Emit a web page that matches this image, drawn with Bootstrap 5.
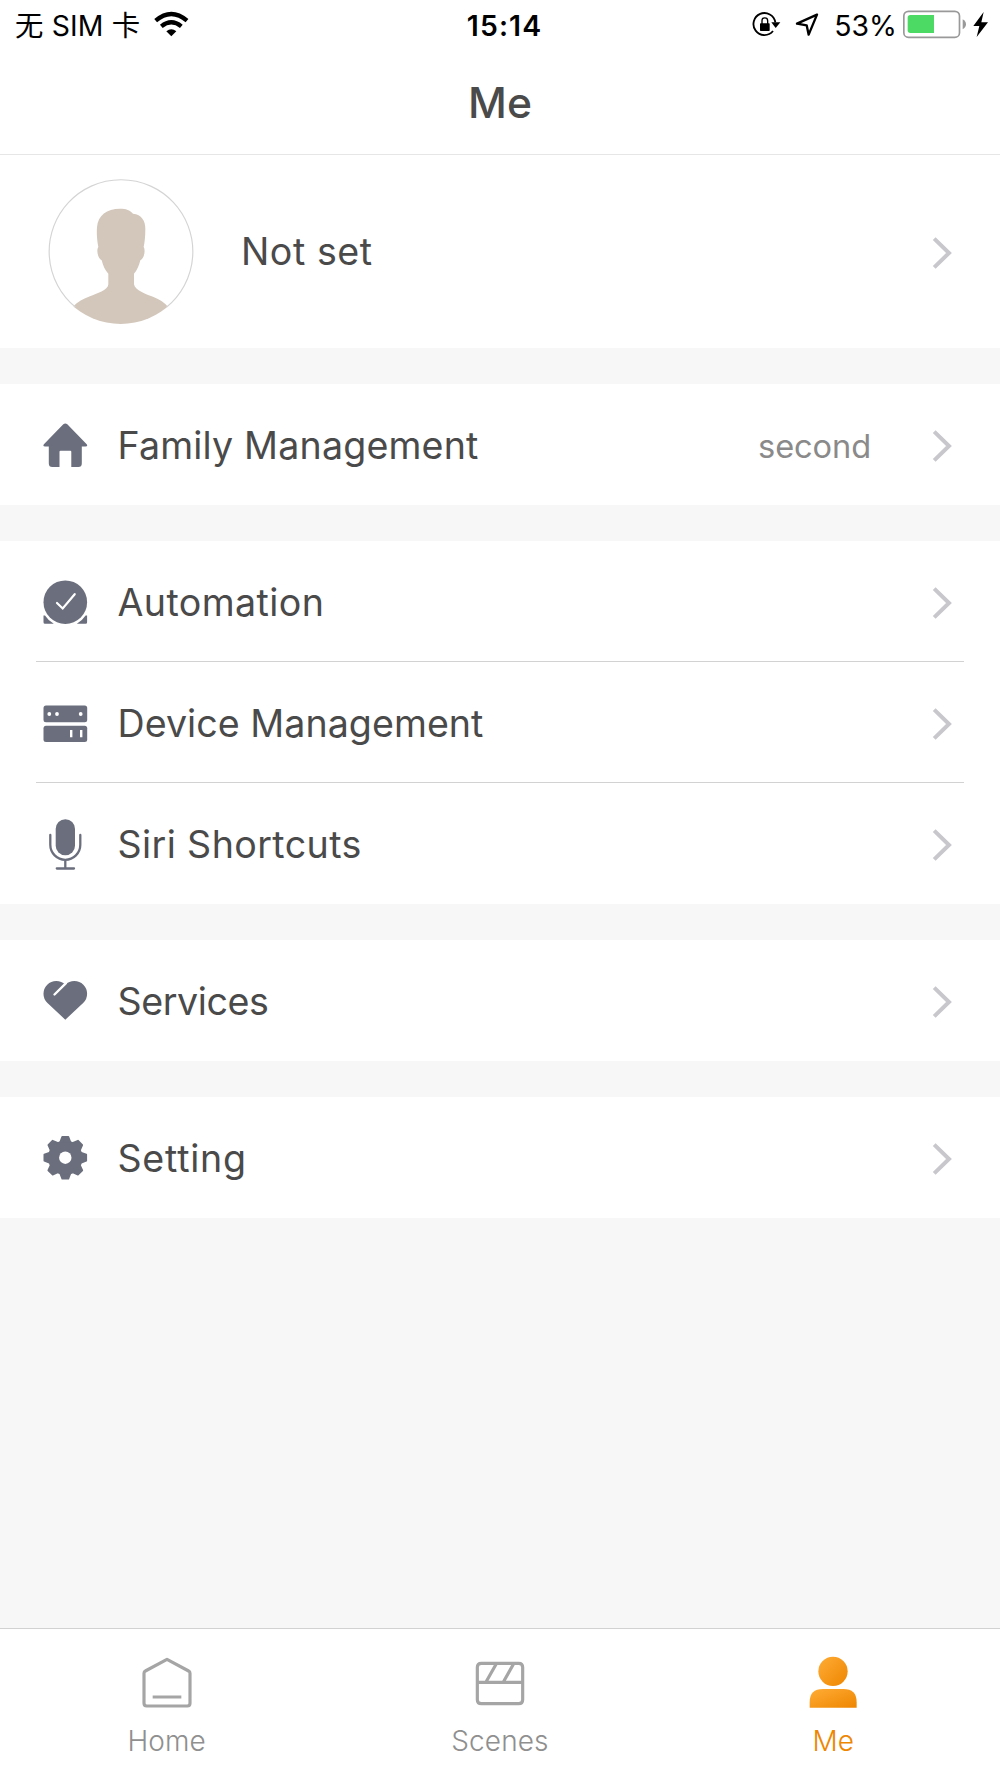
<!DOCTYPE html>
<html lang="en">
<head>
<meta charset="utf-8">
<meta name="viewport" content="width=device-width, initial-scale=1">
<title>Me</title>
<link href="https://cdn.jsdelivr.net/npm/bootstrap@5.3.0/dist/css/bootstrap.min.css" rel="stylesheet">
<style>
body{font-family:Inter,"Noto Sans CJK SC",sans-serif;background:#f7f7f7;color:#4a4a4a;height:1778px;overflow:hidden}
svg{display:block;flex:none}
a{color:inherit;text-decoration:none}
.statusbar{height:50px;color:#000;font-size:28.4px;line-height:52px;padding:0 11px}
.statusbar>div{flex:1 1 0}
.statusbar span{padding-top:1px}
.carrier{margin:0 13px 0 4px;letter-spacing:.15px}
.clock{font-weight:600;letter-spacing:1.1px;padding-left:9px}
.rotation{margin-right:14px}
.location{margin-right:15px}
.power{margin:0 5px}
.titlebar{height:105px;border-bottom:1px solid #e6e6e6;font-size:42.6px;font-weight:500;line-height:106px}
.profile{height:193px;padding:0 48px;color:#4a4a4a}
.profile-name{font-size:37.6px;letter-spacing:.55px;margin-left:47px;padding-top:2px}
.menu-group{padding:0 36px;margin-top:36px}
.menu-row{height:121px;padding:0 12px 0 7px;font-size:37.6px;line-height:48px}
.menu-row+.menu-row{box-shadow:0 -1px 0 #d2d2d2}
.menu-icon{width:45px;height:52px;fill:#6b6f7d;margin-right:29.5px}
.menu-label{padding-top:2px;letter-spacing:.18px}
.track-tight{letter-spacing:-.4px}
.track-device{letter-spacing:.05px}
.track-mid{letter-spacing:.4px}
.track-wide{letter-spacing:.75px}
.aside-note{font-size:32.6px;color:#8a8a8a;margin-right:61px;padding-top:2px;letter-spacing:-.1px}
.chevron{width:20px;height:34px;margin-top:2px;fill:none;stroke:#c7c7cc;stroke-width:4}
.tabbar{height:150px;border-top:1px solid #d2d2d2;font-size:28px;font-weight:300;line-height:40px;color:#8f8f8f;letter-spacing:.1px}
.tabbar svg{width:50px;height:81px;margin-bottom:11px}
.tab-line{fill:none;stroke:#a5a5a5;stroke-width:9.5;stroke-linejoin:round}
.tab-on{color:#ee8600}
</style>
</head>
<body class="d-flex flex-column">
<svg width="0" height="0" class="position-absolute">
<defs>
<symbol id="chev" viewBox="0 0 20 34"><path d="M2.2 2.6 17 17 2.2 31.4"/></symbol>
<linearGradient id="amber" x1="0" y1="0" x2="1" y2="1"><stop offset="0" stop-color="#ffac36"/><stop offset="1" stop-color="#ee8600"/></linearGradient>
<clipPath id="disc"><circle cx="272" cy="304" r="217"/></clipPath>
</defs>
</svg>
<header class="bg-white">
<div class="statusbar d-flex">
<div class="d-flex align-items-center"><span class="carrier">无 SIM 卡</span>
<svg width="36.67" height="50" viewBox="460 0 110 150"><g fill="none" stroke="#000" stroke-width="13"><path d="M468 62Q515 22 562 62"/><path d="M485 79Q515 55 545 79"/></g><path d="M500 94Q515 81 530 94L515 109Z"/></svg>
</div>
<div class="text-center clock">15:14</div>
<div class="d-flex align-items-center justify-content-end">
<svg class="rotation" width="29" height="50" viewBox="36 0 87 150"><path d="M99 93A33 33 0 1 1 106 67" fill="none" stroke="#000" stroke-width="5.5"/><path d="M94 67H121L107 84Z"/><rect x="60" y="70" width="29" height="23" rx="2"/><path d="M66 72V62a8.500 8.500 0 0 1 17 0V72" fill="none" stroke="#000" stroke-width="4"/></svg>
<svg class="location" width="24" height="50" viewBox="165 0 72 150"><path d="M231 44 171 71 200 76 206 104Z" fill="none" stroke="#000" stroke-width="7" stroke-linejoin="round"/></svg>
<span>53%</span>
<svg class="power" width="65" height="50" viewBox="486 0 195 150"><rect x="491.500" y="34" width="167" height="78" rx="14" fill="none" stroke="#999" stroke-width="5"/><path d="M582 45V99H511Q503 99 503 91V53Q503 45 511 45Z" fill="#4cd964"/><path d="M668 58Q678 64 678 73T668 88Z" fill="#999"/></svg>
<svg width="17" height="50" viewBox="696 0 51 150"><path d="M731 36 700 78H718L710 111 744 67H724Z"/></svg>
</div>
</div>
<div class="titlebar text-center">Me</div>
</header>
<main>
<a href="#" class="bg-white profile d-flex align-items-center">
<svg width="146" height="146" viewBox="54 86 438 438"><g clip-path="url(#disc)"><path fill="#d3c7bb" d="M205 290C200 265 200 245 201 230C204 195 230 175 270 175C288 175 300 179 309 190C335 192 346 212 346 235C346 258 344 275 341 290C346 296 345 322 331 330C327 346 321 361 312 370V402C315 420 350 432 365 438C390 448 405 458 414 470V530H130V468C142 455 160 445 180 438C200 430 234 420 235 402V370C225 360 219 346 215 330C202 322 199 298 205 290Z"/></g><path d="M136 470A215.500 215.500 0 1 1 410 470" fill="none" stroke="#d4d4d4" stroke-width="3.500"/></svg>
<span class="profile-name">Not set</span><svg class="chevron ms-auto"><use href="#chev"/></svg></a>

<section class="bg-white menu-group">
<a href="#" class="menu-row d-flex align-items-center"><svg class="menu-icon" viewBox="0 0 45 52"><path d="M20.300 5.300Q22.300 3.800 24.300 5.300L43.700 25.200Q45.200 27.500 42.500 27.500H38.800V44.500Q38.800 48 35.300 48H28.300V32.700Q28.300 31.700 27.300 31.700H17.500Q16.500 31.700 16.500 32.700V48H9.300Q5.800 48 5.800 44.500V27.500H2.100Q-.6 27.500 .9 25.200Z"/></svg><span class="menu-label">Family Management</span><span class="aside-note ms-auto">second</span><svg class="chevron"><use href="#chev"/></svg></a>
</section>

<section class="bg-white menu-group">
<a href="#" class="menu-row d-flex align-items-center"><svg class="menu-icon" viewBox="0 0 45 52"><circle cx="22.300" cy="26.200" r="21.800"/><path d="M14 27 19.700 32.500 31.700 18.200" fill="none" stroke="#fff" stroke-width="2.200" stroke-linecap="round"/><path d="M.5 39.500H2A26 26 0 0 0 10.800 47.800H2Q.5 47.800 .5 46.300ZM44.100 39.500H42.600A26 26 0 0 1 33.800 47.800H42.600Q44.100 47.800 44.100 46.300Z"/></svg><span class="menu-label track-mid">Automation</span><svg class="chevron ms-auto"><use href="#chev"/></svg></a>
<a href="#" class="menu-row d-flex align-items-center"><svg class="menu-icon" viewBox="0 0 45 52"><rect x=".5" y="8.500" width="43.700" height="16.800" rx="2.500"/><rect x=".5" y="28.700" width="43.700" height="16.300" rx="2.500"/><g fill="#fff"><circle cx="6.300" cy="17" r="1.900"/><circle cx="14" cy="17" r="1.900"/><circle cx="37.700" cy="17" r="1.900"/><path d="M27 33h2.400v7.300H27zM37 33h2.400v7.300H37z"/></g></svg><span class="menu-label track-device">Device Management</span><svg class="chevron ms-auto"><use href="#chev"/></svg></a>
<a href="#" class="menu-row d-flex align-items-center"><svg class="menu-icon" viewBox="0 0 45 52"><rect x="12.700" y="1.200" width="19.300" height="36.100" rx="9.650"/><path d="M7.300 17V26.800a15 15 0 0 0 30 0V17M22.300 42V50.500M13.800 50.500H31" fill="none" stroke="#6b6f7d" stroke-width="2.300" stroke-linecap="round"/></svg><span class="menu-label track-mid">Siri Shortcuts</span><svg class="chevron ms-auto"><use href="#chev"/></svg></a>
</section>

<section class="bg-white menu-group">
<a href="#" class="menu-row d-flex align-items-center"><svg class="menu-icon" viewBox="0 0 45 52"><path d="M22.300 44.700 4.200 27.800A12.600 12.600 0 0 1 22.300 9.800A12.600 12.600 0 0 1 40.400 27.800Z"/><path d="M23 8.200 11.500 19.500" fill="none" stroke="#fff" stroke-width="2.400" stroke-linecap="round"/></svg><span class="menu-label track-tight">Services</span><svg class="chevron ms-auto"><use href="#chev"/></svg></a>
</section>

<section class="bg-white menu-group">
<a href="#" class="menu-row d-flex align-items-center"><svg class="menu-icon" viewBox="0 0 45 52"><g transform="translate(22.300 25.700)"><circle r="17.300"/><g stroke="#6b6f7d" stroke-width="1.600" stroke-linejoin="round"><path id="tooth" d="M-5-16-3.100-21H3.100L5-16ZM-5 16-3.100 21H3.100L5 16Z"/><use href="#tooth" transform="rotate(45)"/><use href="#tooth" transform="rotate(90)"/><use href="#tooth" transform="rotate(135)"/></g><circle r="6.200" fill="#fff"/></g></svg><span class="menu-label track-wide">Setting</span><svg class="chevron ms-auto"><use href="#chev"/></svg></a>
</section>
</main>

<nav class="tabbar row g-0 bg-white mt-auto text-center">
<a href="#" class="col d-flex flex-column align-items-center"><svg viewBox="125 27 150 243"><path class="tab-line" d="M200 118 265 153Q269 155 269 160V250Q269 258 261 258H139Q131 258 131 250V160Q131 155 135 153ZM157 231H243"/></svg>Home</a>
<a href="#" class="col d-flex flex-column align-items-center"><svg viewBox="135 27 150 243"><path class="tab-line" d="M154 130H266Q278 130 278 142V239Q278 251 266 251H154Q142 251 142 239V142Q142 130 154 130ZM142 187H278M199 131 168 186M251 131 220 186"/></svg>Scenes</a>
<a href="#" class="col d-flex flex-column align-items-center tab-on"><svg viewBox="145 27 150 243" fill="url(#amber)"><circle cx="220" cy="154" r="44"/><path d="M150 263V246Q150 207 190 207H251Q291 207 291 246V263Z"/></svg>Me</a>
</nav>
<script src="https://cdn.jsdelivr.net/npm/bootstrap@5.3.0/dist/js/bootstrap.bundle.min.js"></script>
</body>
</html>
